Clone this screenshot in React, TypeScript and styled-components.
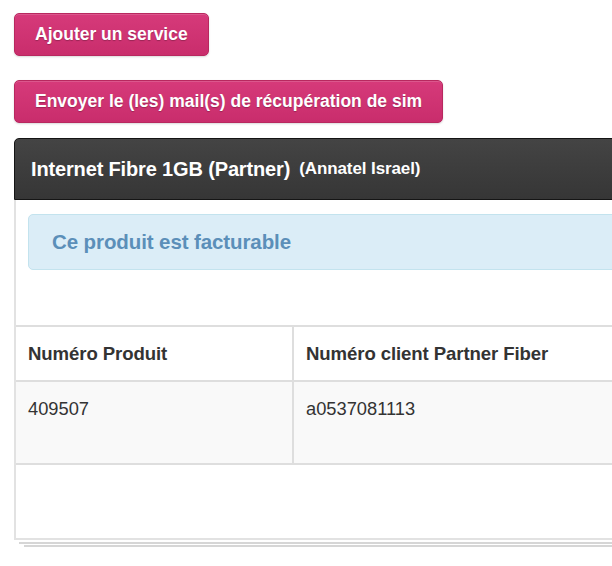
import React from "react";
import styled, { createGlobalStyle } from "styled-components";

const Global = createGlobalStyle`
  html { overflow: hidden; }
  html, body { margin: 0; padding: 0; background: #fff; }
  body { font-family: "Liberation Sans", Arial, sans-serif; min-height: 566px; }
`;

const Page = styled.div`
  padding: 13px 0 0 14px;
  width: 720px;
`;

const Actions = styled.div`
  display: flex;
  flex-direction: column;
  align-items: flex-start;
  gap: 24px;
  margin-bottom: 15px;
`;

const PinkButton = styled.button`
  height: 43px;
  padding: 0 20px;
  border: 1px solid #b8285f;
  border-radius: 5px;
  background: linear-gradient(#d63a7a, #c92d6c);
  color: #fff;
  font-family: "Liberation Sans", Arial, sans-serif;
  font-weight: bold;
  font-size: 17.5px;
  text-shadow: 0 1px 1px rgba(0, 0, 0, 0.25);
  box-shadow: inset 0 1px 0 rgba(255, 255, 255, 0.15), 0 1px 2px rgba(0, 0, 0, 0.15);
  cursor: pointer;
`;

const Panel = styled.div`
  border: 2px solid #e2e2e2;
  border-top: none;
  border-radius: 5px 5px 0 0;
  background: #fff;
  box-shadow:
    0 7px 0 -5px #fff,
    0 9px 0 -5px #d6d6d6,
    0 15px 0 -10px #fff,
    0 17px 0 -10px #d6d6d6;
`;

const PanelHeader = styled.div`
  height: 62px;
  margin: 0 -2px;
  box-sizing: border-box;
  display: flex;
  align-items: center;
  gap: 9px;
  padding: 0 0 0 16px;
  background: linear-gradient(#444, #363636);
  border: 1px solid #151515;
  border-radius: 5px 5px 0 0;
  color: #fff;
  font-weight: bold;
  font-size: 20px;
  letter-spacing: -0.15px;
`;

const HeaderSub = styled.span`
  font-size: 17px;
  letter-spacing: -0.1px;
`;

const PanelBody = styled.div`
  padding: 14px 0 0 0;
`;

const Alert = styled.div`
  margin: 0 0 55px 12px;
  height: 56px;
  box-sizing: border-box;
  display: flex;
  align-items: center;
  padding-left: 23px;
  background: #dbedf7;
  border: 1px solid #c3e3ee;
  border-radius: 5px;
  color: #5b8fb9;
  font-weight: bold;
  font-size: 20.5px;
  letter-spacing: -0.1px;
`;

const Table = styled.table`
  width: 100%;
  border-collapse: collapse;
  margin-bottom: 73px;
`;

const Th = styled.th<{ $w?: number }>`
  text-align: left;
  height: 55px;
  padding: 0 12px;
  border-top: 2px solid #dedede;
  border-bottom: 2px solid #dedede;
  border-right: 2px solid #dedede;
  color: #333;
  font-size: 18.6px;
  font-weight: bold;
  letter-spacing: -0.1px;
  width: ${(p) => (p.$w ? `${p.$w}px` : "auto")};
  box-sizing: border-box;
  &:last-child { border-right: none; }
`;

const Td = styled.td`
  vertical-align: top;
  height: 83px;
  box-sizing: border-box;
  padding: 16px 12px 0;
  background: #f9f9f9;
  border-bottom: 2px solid #dedede;
  border-right: 2px solid #dedede;
  color: #333;
  font-size: 18.3px;
  &:last-child { border-right: none; }
`;

export default function App() {
  return (
    <>
      <Global />
      <Page>
        <Actions>
          <PinkButton>Ajouter un service</PinkButton>
          <PinkButton>Envoyer le (les) mail(s) de récupération de sim</PinkButton>
        </Actions>
        <Panel>
          <PanelHeader>
            Internet Fibre 1GB (Partner) <HeaderSub>(Annatel Israel)</HeaderSub>
          </PanelHeader>
          <PanelBody>
            <Alert>Ce produit est facturable</Alert>
            <Table>
              <thead>
                <tr>
                  <Th $w={277}>Numéro Produit</Th>
                  <Th>Numéro client Partner Fiber</Th>
                </tr>
              </thead>
              <tbody>
                <tr>
                  <Td>409507</Td>
                  <Td>a0537081113</Td>
                </tr>
              </tbody>
            </Table>
          </PanelBody>
        </Panel>
      </Page>
    </>
  );
}
